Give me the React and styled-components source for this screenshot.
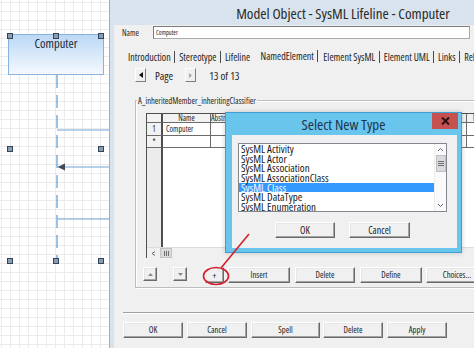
import React from "react";
import styled, { createGlobalStyle } from "styled-components";

const COND = `"Open Sans", "Liberation Sans", sans-serif`;

const GlobalStyle = createGlobalStyle`
  html, body { margin: 0; padding: 0; }
  body {
    width: 474px; height: 348px; overflow: hidden; background: #fff;
    font-family: ${COND}; font-stretch: 75%; color: #1a1a1a;
  }
  #root { width: 474px; height: 348px; overflow: hidden; }
  * { box-sizing: border-box; }
`;

const Screen = styled.div`
  position: relative;
  display: flex;
  width: 474px;
  height: 348px;
  overflow: hidden;
`;

/* ---------- diagram canvas ---------- */
const Canvas = styled.div`
  position: relative;
  flex: none;
  width: 109px;
  height: 100%;
  background-color: #fff;
  background-image:
    linear-gradient(to right, #ebebeb 1px, transparent 1px),
    linear-gradient(to bottom, #ebebeb 1px, transparent 1px);
  background-size: 9px 9px;
  background-position: 1px 2px;
`;

const LifelineHead = styled.div`
  position: absolute;
  left: 8px;
  top: 34px;
  width: 96px;
  height: 41px;
  border: 1px solid #86b3e0;
  background: linear-gradient(to bottom, #bcd8f6, #e9f2fc 80%, #f6f9fe);
  font-size: 12.5px;
  line-height: 15px;
  padding-top: 1px;
  text-align: center;
  color: #1b2838;
`;

const DiagramSvg = styled.svg`
  position: absolute;
  left: 0;
  top: 0;
  pointer-events: none;
`;

/* ---------- main window ---------- */
const Window = styled.div`
  flex: none;
  width: 467px;
  height: 100%;
  display: flex;
  flex-direction: column;
  border-left: 1px solid #9cb0c2;
  background: #d8e3ed;
`;

const TitleBar = styled.div`
  flex: none;
  height: 25px;
  display: flex;
  align-items: center;
  justify-content: center;
  font-size: 15px;
  color: #2a2a2a;
`;

const Body = styled.div`
  flex: 1;
  margin-left: 4px;
  background: #f0f0f0;
  display: flex;
  flex-direction: column;
`;

const NameRow = styled.div`
  display: flex;
  align-items: center;
  height: 13px;
  margin-top: 1px;
  padding-left: 8px;
`;

const FieldLabel = styled.span`
  width: 31px;
  font-size: 8.2px;
  color: #222;
`;

const NameInput = styled.div`
  width: 317px;
  height: 13px;
  display: flex;
  align-items: center;
  padding-left: 2px;
  background: #fff;
  border: 1px solid #a9a9a9;
  border-top-color: #7c7c7c;
  border-left-color: #7c7c7c;
  font-size: 6.4px;
  color: #222;
`;

const TabsRow = styled.div`
  display: flex;
  align-items: center;
  height: 16px;
  margin-top: 10px;
  padding-left: 11px;
  font-size: 10px;
  color: #222;
  white-space: nowrap;
`;

const Tab = styled.span`
  height: 12px;
  line-height: 12px;
  padding: 0 3.5px 0 4px;
  margin-left: ${(p) => (p.$active ? 3 : 0)}px;
  margin-right: ${(p) => (p.$active ? 1 : 0)}px;
  border-right: ${(p) => (p.$noSep ? "none" : "1px solid #4a4a4a")};
  position: relative;
  top: ${(p) => (p.$active ? -1 : 0)}px;
  &:first-child {
    padding-left: 3px;
  }
`;

const PageRow = styled.div`
  display: flex;
  align-items: center;
  height: 14px;
  margin-top: 3px;
  padding-left: 21px;
  font-size: 11px;
  color: #222;
`;

const ArrowButton = styled.div`
  width: 11px;
  height: 14px;
  margin-left: ${(p) => p.$ml || 0}px;
  display: flex;
  align-items: center;
  justify-content: center;
  background: #f0f0f0;
  border: 1px solid;
  border-color: #fff #7d7d7d #7d7d7d #fff;
`;

const PageText = styled.span`
  margin-left: ${(p) => p.$ml}px;
`;

const Group = styled.fieldset`
  margin: 14px 21px 0 21px;
  padding: 8px 0 4px 1px;
  border: 1px solid #bdbdbd;
  box-shadow: inset 1px 1px 0 #fff, 1px 1px 0 #fff;
  min-width: 0;
`;

const GroupLegend = styled.legend`
  padding: 0 1px;
  margin-left: 0;
  font-size: 8.5px;
  line-height: 9px;
  color: #222;
`;

/* ---------- data grid ---------- */
const COLS = "16px 48px 15px 50px 50px 50px 50px 15px 26px 40px 40px";

const DataGrid = styled.div`
  margin-left: 9px;
  height: 145px;
  display: flex;
  flex-direction: column;
  background: #fff;
  border-left: 1px solid #505050;
  border-top: 1px solid #505050;
  font-size: 8px;
  color: #222;
`;

const GridRow = styled.div`
  flex: none;
  display: grid;
  grid-template-columns: ${COLS};
  height: ${(p) => p.$h}px;
  line-height: ${(p) => p.$h - 1}px;
`;

const Cell = styled.div`
  overflow: hidden;
  white-space: nowrap;
  text-align: ${(p) => (p.$left ? "left" : "center")};
  padding-left: ${(p) => (p.$left ? 3 : 0)}px;
  background: ${(p) => (p.$head ? "#f2f2f2" : "#fff")};
  border-bottom: 1px solid #6b6b6b;
  border-right: ${(p) => (p.$rowHead ? "2px solid #4e4e4e" : "1px solid #6b6b6b")};
`;

const GridFiller = styled.div`
  flex: 1;
  display: grid;
  grid-template-columns: 16px 1fr;
`;

const RowHeadStripe = styled.div`
  background: #ececec;
  border-right: 2px solid #4e4e4e;
`;

const HScroll = styled.div`
  flex: none;
  height: 11px;
  display: flex;
  align-items: center;
  background: #f0f0f0;
  border-top: 1px solid #dcdcdc;
`;

const ScrollArrow = styled.div`
  width: 12px;
  height: 10px;
  display: flex;
  align-items: center;
  justify-content: center;
`;

const HThumb = styled.div`
  width: 12px;
  height: 10px;
  margin-left: 1px;
  background: #dadada;
  border: 1px solid #c3c3c3;
  display: flex;
  align-items: center;
  justify-content: center;
  gap: 1px;
`;

const Grip = styled.span`
  display: block;
  width: ${(p) => (p.$h ? 6 : 1)}px;
  height: ${(p) => (p.$h ? 1 : 5)}px;
  background: #6e6e6e;
`;

/* ---------- buttons ---------- */
const ButtonsRow = styled.div`
  display: flex;
  align-items: flex-start;
  margin-top: ${(p) => p.$mt || 0}px;
  margin-left: ${(p) => p.$ml || 0}px;
`;

const ClassicButton = styled.button`
  flex: none;
  width: ${(p) => p.$w}px;
  height: ${(p) => p.$h || 16}px;
  margin-left: ${(p) => p.$ml || 0}px;
  padding: 0;
  display: flex;
  align-items: center;
  justify-content: center;
  background: #f0f0f0;
  font-family: ${COND};
  font-stretch: 75%;
  font-size: ${(p) => p.$fs || 8.6}px;
  color: #222;
  border: 1px solid;
  border-color: #fff #6a6a6a #6a6a6a #fff;
  box-shadow: inset -1px -1px 0 #a3a3a3, inset 1px 1px 0 #e6e6e6;
  border-radius: 0;
`;

const Separator = styled.div`
  margin: 24px 9px 0 9px;
  border-top: 1px solid #a0a0a0;
  border-bottom: 1px solid #fff;
`;

/* ---------- dialog ---------- */
const Dialog = styled.div`
  position: absolute;
  left: 225px;
  top: 112px;
  width: 237px;
  height: 141px;
  display: flex;
  flex-direction: column;
  background: #69c5eb;
  border: 1px solid #3f9fd0;
  box-shadow: 0 0 5px rgba(0, 0, 0, 0.2);
`;

const DialogTitle = styled.div`
  position: relative;
  flex: none;
  height: 22px;
  display: flex;
  align-items: center;
  justify-content: center;
  font-size: 15px;
  color: #1c3550;
`;

const CloseButton = styled.div`
  position: absolute;
  top: 0;
  right: 3px;
  width: 26px;
  height: 16px;
  display: flex;
  align-items: center;
  justify-content: center;
  background: #c75050;
`;

const DialogClient = styled.div`
  flex: 1;
  margin: 0 4px 4px 6px;
  padding: 8px 0 0 6px;
  background: #f0f0f0;
  display: flex;
  flex-direction: column;
`;

const ListBox = styled.div`
  width: 209px;
  height: 69px;
  display: flex;
  background: #fff;
  border: 1px solid #828790;
`;

const ListItems = styled.div`
  flex: 1;
  overflow: hidden;
`;

const ListItem = styled.div`
  height: 9.7px;
  line-height: 9.7px;
  padding-left: 2px;
  font-size: 11px;
  white-space: nowrap;
  background: ${(p) => (p.$selected ? "#3399ff" : "transparent")};
  color: ${(p) => (p.$selected ? "#f4f9ff" : "#1a1a1a")};
`;

const VScroll = styled.div`
  width: 12px;
  display: flex;
  flex-direction: column;
  align-items: center;
  background: #fafafa;
  border-left: 1px solid #ececec;
`;

const VArrow = styled.div`
  height: ${(p) => p.$h}px;
  display: flex;
  align-items: center;
  justify-content: center;
`;

const VThumb = styled.div`
  width: 10px;
  height: 17px;
  margin-top: 1px;
  display: flex;
  flex-direction: column;
  align-items: center;
  justify-content: center;
  gap: 1px;
  background: #dadada;
  border: 1px solid #c0c0c0;
`;

const VSpacer = styled.div`
  flex: 1;
`;

const Annotation = styled.svg`
  position: absolute;
  left: 0;
  top: 0;
  pointer-events: none;
`;

/* ---------- small drawings ---------- */
const Tri = ({ dir, color = "#111", w = 4, h = 6 }) => {
  const pts = {
    left: `${w},0 ${w},${h} 0,${h / 2}`,
    right: `0,0 0,${h} ${w},${h / 2}`,
    up: `0,${h} ${w},${h} ${w / 2},0`,
    down: `0,0 ${w},0 ${w / 2},${h}`,
  }[dir];
  return (
    <svg width={w} height={h} viewBox={`0 0 ${w} ${h}`}>
      <polygon points={pts} fill={color} />
    </svg>
  );
};

const Chevron = ({ dir }) => (
  <svg width="7" height="5" viewBox="0 0 7 5">
    <polyline
      points={dir === "up" ? "1,4 3.5,1.5 6,4" : dir === "down" ? "1,1 3.5,3.5 6,1" : "5,0.5 2,2.5 5,4.5"}
      fill="none"
      stroke="#6b6b6b"
      strokeWidth="1"
    />
  </svg>
);

const handles = [
  [10, 36], [56, 36], [101, 36],
  [10, 149], [101, 149],
  [10, 261], [56, 261], [101, 261],
];

const Diagram = () => (
  <DiagramSvg width="109" height="348">
    <line x1="57" y1="75" x2="57" y2="262" stroke="#5b9bd5" strokeWidth="1.2" strokeDasharray="13 7" />
    <line x1="57" y1="130" x2="109" y2="130" stroke="#6fa3d6" strokeWidth="1" />
    <line x1="64" y1="167" x2="109" y2="167" stroke="#6fa3d6" strokeWidth="1" />
    <polygon points="57.5,167 65,163.5 65,170.5" fill="#3c4a5a" />
    <line x1="58" y1="219" x2="109" y2="219" stroke="#6fa3d6" strokeWidth="1" />
    {handles.map(([x, y], i) => (
      <rect key={i} x={x - 2.5} y={y - 2.5} width="5" height="5" fill="#8a9db2" stroke="#34465a" strokeWidth="1" />
    ))}
  </DiagramSvg>
);

const tabs = [
  { t: "Introduction" },
  { t: "Stereotype" },
  { t: "Lifeline", noSep: true },
  { t: "NamedElement", active: true },
  { t: "Element SysML" },
  { t: "Element UML" },
  { t: "Links" },
  { t: "Relations" },
];

const headers = ["", "Name", "Abstract", "Visibility", "Leaf", "Active", "Static", "Final", "Width", "Persistent", "Query"];

const listItems = [
  "SysML Activity",
  "SysML Actor",
  "SysML Association",
  "SysML AssociationClass",
  "SysML Class",
  "SysML DataType",
  "SysML Enumeration",
];

export default function App() {
  return (
    <>
      <GlobalStyle />
      <Screen>
        <Canvas>
          <LifelineHead>Computer</LifelineHead>
          <Diagram />
        </Canvas>

        <Window>
          <TitleBar>Model Object - SysML Lifeline - Computer</TitleBar>
          <Body>
            <NameRow>
              <FieldLabel>Name</FieldLabel>
              <NameInput>Computer</NameInput>
            </NameRow>

            <TabsRow>
              {tabs.map((tb) => (
                <Tab key={tb.t} $active={tb.active} $noSep={tb.noSep}>
                  {tb.t}
                </Tab>
              ))}
            </TabsRow>

            <PageRow>
              <ArrowButton>
                <Tri dir="left" color="#111" w={4} h={6} />
              </ArrowButton>
              <PageText $ml={9}>Page</PageText>
              <ArrowButton $ml={12}>
                <Tri dir="right" color="#a8a8a8" w={3} h={5} />
              </ArrowButton>
              <PageText $ml={13}>13 of 13</PageText>
            </PageRow>

            <Group>
              <GroupLegend>A_inheritedMember_inheritingClassifier</GroupLegend>
              <DataGrid>
                <GridRow $h={9}>
                  {headers.map((h, i) => (
                    <Cell key={i} $head $rowHead={i === 0}>
                      {h}
                    </Cell>
                  ))}
                </GridRow>
                <GridRow $h={13}>
                  <Cell $head $rowHead>1</Cell>
                  <Cell $left>Computer</Cell>
                  {headers.slice(2).map((_, i) => (
                    <Cell key={i} />
                  ))}
                </GridRow>
                <GridRow $h={12}>
                  <Cell $head $rowHead>*</Cell>
                  {headers.slice(1).map((_, i) => (
                    <Cell key={i} />
                  ))}
                </GridRow>
                <GridFiller>
                  <RowHeadStripe />
                  <div />
                </GridFiller>
                <HScroll>
                  <ScrollArrow>
                    <Chevron dir="left" />
                  </ScrollArrow>
                  <HThumb>
                    <Grip />
                    <Grip />
                    <Grip />
                  </HThumb>
                </HScroll>
              </DataGrid>

              <ButtonsRow $mt={9} $ml={6}>
                <ClassicButton $w={14} $h={14}>
                  <Tri dir="up" color="#8a8a8a" w={5} h={3} />
                </ClassicButton>
                <ClassicButton $w={14} $h={14} $ml={16}>
                  <Tri dir="down" color="#8a8a8a" w={5} h={3} />
                </ClassicButton>
                <ClassicButton $w={19} $ml={18} $fs={9}>+</ClassicButton>
                <ClassicButton $w={62} $ml={4}>Insert</ClassicButton>
                <ClassicButton $w={60} $ml={5}>Delete</ClassicButton>
                <ClassicButton $w={62} $ml={5}>Define</ClassicButton>
                <ClassicButton $w={62} $ml={4}>Choices...</ClassicButton>
              </ButtonsRow>
            </Group>

            <Separator />

            <ButtonsRow $mt={8} $ml={9}>
              <ClassicButton $w={60}>OK</ClassicButton>
              <ClassicButton $w={60} $ml={4}>Cancel</ClassicButton>
              <ClassicButton $w={69} $ml={4}>Spell</ClassicButton>
              <ClassicButton $w={60} $ml={3}>Delete</ClassicButton>
              <ClassicButton $w={60} $ml={4}>Apply</ClassicButton>
            </ButtonsRow>
          </Body>
        </Window>

        <Dialog>
          <DialogTitle>
            Select New Type
            <CloseButton>
              <svg width="9" height="8" viewBox="0 0 9 8">
                <path d="M1 0.5 L8 7.5 M8 0.5 L1 7.5" stroke="#2a1010" strokeWidth="2" />
              </svg>
            </CloseButton>
          </DialogTitle>
          <DialogClient>
            <ListBox>
              <ListItems>
                {listItems.map((it) => (
                  <ListItem key={it} $selected={it === "SysML Class"}>
                    {it}
                  </ListItem>
                ))}
              </ListItems>
              <VScroll>
                <VArrow $h={10}>
                  <Chevron dir="up" />
                </VArrow>
                <VThumb>
                  <Grip $h />
                  <Grip $h />
                  <Grip $h />
                </VThumb>
                <VSpacer />
                <VArrow $h={12}>
                  <Chevron dir="down" />
                </VArrow>
              </VScroll>
            </ListBox>
            <ButtonsRow $mt={10} $ml={37}>
              <ClassicButton $w={60} $fs={10}>OK</ClassicButton>
              <ClassicButton $w={61} $ml={14} $fs={10}>Cancel</ClassicButton>
            </ButtonsRow>
          </DialogClient>
        </Dialog>

        <Annotation width="474" height="348">
          <ellipse cx="216" cy="276" rx="12.5" ry="8.5" fill="none" stroke="#d4202c" strokeWidth="1.6" />
          <line x1="221" y1="268" x2="249" y2="234" stroke="#d4202c" strokeWidth="1.6" />
        </Annotation>
      </Screen>
    </>
  );
}
